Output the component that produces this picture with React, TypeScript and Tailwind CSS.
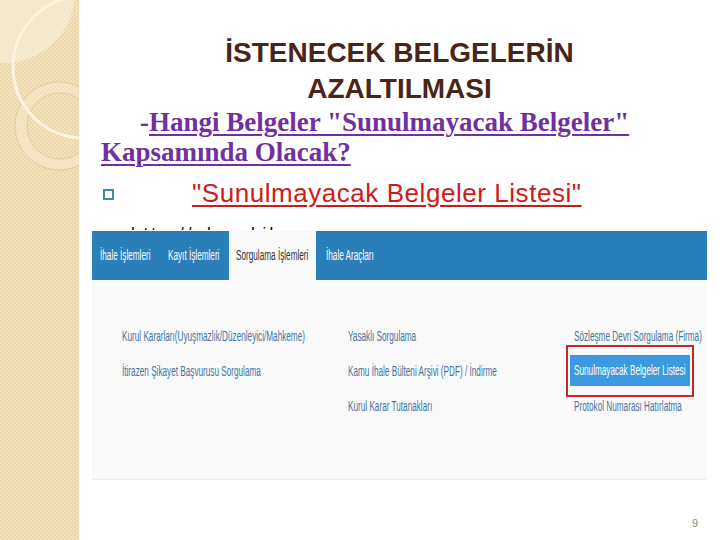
import React from "react";

const Narrow = ({ children, className = "" }: { children: React.ReactNode; className?: string }) => (
  <span className={"inline-block whitespace-nowrap origin-left scale-x-[0.585] " + className}>{children}</span>
);

function Sidebar() {
  return (
    <div className="relative w-[79px] h-[540px] shrink-0 overflow-hidden bg-[#f0dfb4] bg-[image:repeating-conic-gradient(#f3e4bf_0%_25%,#ebd7a8_0%_50%)] bg-[length:4px_4px]">
      <svg className="absolute left-0 top-0" width="79" height="540" viewBox="0 0 79 540">
        <circle cx="4" cy="-8" r="71" fill="#f7eed6" fillOpacity="0.75" />
        <path
          d="M 59 82 A 44 44 0 1 1 58.99 82 Z M 60 93 A 33 33 0 1 0 60.01 93 Z"
          fill="#f6e9c9"
          fillOpacity="0.6"
          fillRule="evenodd"
          stroke="#d8c496"
          strokeWidth="0.8"
        />
        <circle cx="84" cy="67" r="71" fill="none" stroke="#fcf5e2" strokeWidth="3" />
      </svg>
    </div>
  );
}

export default function App() {
  return (
    <div className="w-[720px] h-[540px] flex bg-white overflow-hidden">
      <Sidebar />
      <div className="flex-1 flex flex-col">
        <div className="pt-[35px] text-center text-[28px] leading-[36px] font-bold text-[#4b2418] [font-family:'Liberation_Sans',Arial,sans-serif]">
          <div>İSTENECEK BELGELERİN</div>
          <div>AZALTILMASI</div>
        </div>
        <div className="pl-[22px] text-[27px] leading-[30px] font-bold text-[#7030a0] [font-family:'Liberation_Serif','Times_New_Roman',serif]">
          <div className="pl-[39px] whitespace-nowrap">
            -<span className="underline decoration-2 underline-offset-[3px]">Hangi Belgeler "Sunulmayacak Belgeler"</span>
          </div>
          <div className="whitespace-nowrap">
            <span className="underline decoration-2 underline-offset-[3px]">Kapsamında Olacak?</span>
          </div>
        </div>
        <div className="mt-[10px] pl-[24px] flex items-center h-[32px] [font-family:'Liberation_Sans',Arial,sans-serif]">
          <span className="w-[11px] h-[11px] border-2 border-[#3b8f9a] mt-[2px]" />
          <span className="ml-[78px] text-[26px] leading-[32px] tracking-[0.55px] text-[#d01a1a] underline decoration-2 underline-offset-[3px]">
            "Sunulmayacak Belgeler Listesi"
          </span>
        </div>
        <div className="h-[3px] mt-[18px] overflow-hidden pl-[52px] text-[17px] leading-[13px] text-black [font-family:'Liberation_Sans',Arial,sans-serif]">
          <span className="inline-block tracking-[3px] whitespace-nowrap">http://ekap.kik.gov</span>
        </div>
        <div className="mt-[1px] ml-[13px] w-[615px] h-[249px] flex flex-col bg-[#f9f9fa] border-b border-[#ececec] text-[14px] [font-family:'Liberation_Sans',Arial,sans-serif]">
          <div className="h-[49px] shrink-0 bg-[#2b7fb9] flex text-white">
            <div className="w-[67px] pl-[8px] flex items-center overflow-hidden"><Narrow>İhale İşlemleri</Narrow></div>
            <div className="w-[70px] pl-[9px] flex items-center overflow-hidden"><Narrow>Kayıt İşlemleri</Narrow></div>
            <div className="w-[87px] pl-[7px] flex items-center overflow-hidden bg-[#f9f9f9] text-[#333]"><Narrow>Sorgulama İşlemleri</Narrow></div>
            <div className="w-[70px] pl-[10px] flex items-center overflow-hidden"><Narrow>İhale Araçları</Narrow></div>
          </div>
          <div className="pt-[45px] pl-[30px] grid grid-cols-[226px_226px_1fr] text-[#44739f]">
            <div className="flex flex-col gap-[13px]">
              <div className="h-[22px] flex items-center overflow-hidden"><Narrow>Kurul Kararları(Uyuşmazlık/Düzenleyici/Mahkeme)</Narrow></div>
              <div className="h-[22px] flex items-center overflow-hidden"><Narrow>İtirazen Şikayet Başvurusu Sorgulama</Narrow></div>
            </div>
            <div className="flex flex-col gap-[13px]">
              <div className="h-[22px] flex items-center overflow-hidden"><Narrow>Yasaklı Sorgulama</Narrow></div>
              <div className="h-[22px] flex items-center overflow-hidden"><Narrow>Kamu İhale Bülteni Arşivi (PDF) / İndirme</Narrow></div>
              <div className="h-[22px] flex items-center overflow-hidden"><Narrow>Kurul Karar Tutanakları</Narrow></div>
            </div>
            <div className="flex flex-col gap-[13px]">
              <div className="h-[22px] flex items-center overflow-hidden"><Narrow>Sözleşme Devri Sorgulama (Firma)</Narrow></div>
              <div className="relative h-[22px] flex items-center">
                <div className="absolute left-[-8px] top-[-15px] w-[128px] h-[52px] border-2 border-[#c4262c]" />
                <div className="absolute left-[-4px] top-[-5px] w-[120px] h-[31px] bg-[#3c9ae0] overflow-hidden flex items-center pl-[4px]">
                  <Narrow className="text-white">Sunulmayacak Belgeler Listesi</Narrow>
                </div>
              </div>
              <div className="h-[22px] flex items-center overflow-hidden"><Narrow>Protokol Numarası Hatırlatma</Narrow></div>
            </div>
          </div>
        </div>
        <div className="mt-[36px] pr-[22px] text-right text-[11px] leading-[14px] text-[#8a8a78] [font-family:'Liberation_Sans',Arial,sans-serif]">9</div>
      </div>
    </div>
  );
}
